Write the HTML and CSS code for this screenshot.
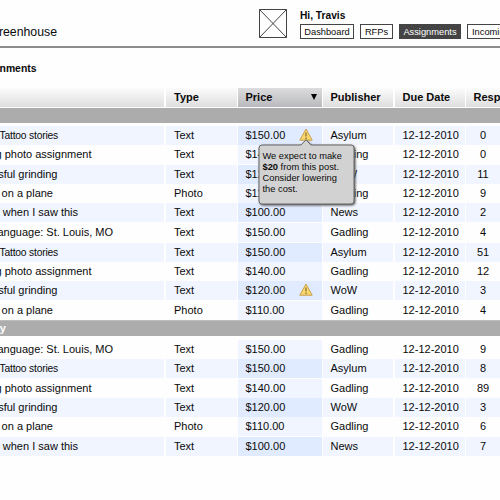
FILE: index.html
```
<!DOCTYPE html>
<html lang="en">
<head>
<meta charset="utf-8">
<title>Greenhouse</title>
<link rel="stylesheet" href="styles.css">
</head>
<body>
<header class="top">
  <div class="brand">reenhouse</div>
  <svg class="avatar" viewBox="0 0 30 31"><path d="M1.500 1.500H28.500V29.500H1.500ZM1.500 1.500L28.500 29.500M28.500 1.500L1.500 29.500"/></svg>
  <div class="user">
    <div class="hello">Hi, Travis</div>
    <nav class="tabs">
      <a class="tab dash">Dashboard</a><a class="tab rfps">RFPs</a><a class="tab assign active">Assignments</a><a class="tab incoming">Incoming</a>
    </nav>
  </div>
</header>
<h1 class="title"><span>gnments</span></h1>
<div class="row head">
  <div></div><div>Type</div><div class="sorted">Price<svg class="arrow" viewBox="0 0 6 6"><path d="M0 0H6L3 6Z"/></svg></div><div>Publisher</div><div>Due Date</div><div>Resp</div>
</div>
<div class="band"></div>
<main class="group first">
  <div class="row alt"><div><span class="name tattoo">Tattoo stories</span></div><div>Text</div><div>$150.00
    <svg class="warn" viewBox="0 0 14 13"><path class="tri" d="M7 1L13.2 12.2H.8Z"/><path class="mark" d="M7 4.5V8.5M7 9.6V11"/></svg>
    <aside class="tip">
      <svg class="bubble" viewBox="0 0 100 66"><path d="M4 6H43L48 .8L53 6H93Q96 6 96 9V62Q96 65 93 65H4Q1 65 1 62V9Q1 6 4 6Z"/></svg>
      <p>We expect to make<br><b>$20</b> from this post.<br>Consider lowering<br>the cost.</p>
    </aside></div><div>Asylum</div><div>12-12-2010</div><div>0</div></div>
  <div class="row"><div><span class="name photo">g photo assignment</span></div><div>Text</div><div>$140.00</div><div>Gadling</div><div>12-12-2010</div><div>0</div></div>
  <div class="row alt"><div><span class="name grind">sful grinding</span></div><div>Text</div><div>$120.00</div><div>WoW</div><div>12-12-2010</div><div>11</div></div>
  <div class="row"><div><span class="name plane">on a plane</span></div><div>Photo</div><div>$110.00</div><div>Gadling</div><div>12-12-2010</div><div>9</div></div>
  <div class="row alt"><div><span class="name saw">e when I saw this</span></div><div>Text</div><div>$100.00</div><div>News</div><div>12-12-2010</div><div>2</div></div>
  <div class="row spaced"><div><span class="name lang">anguage: St. Louis, MO</span></div><div>Text</div><div>$150.00</div><div>Gadling</div><div>12-12-2010</div><div>4</div></div>
  <div class="row alt"><div><span class="name tattoo">Tattoo stories</span></div><div>Text</div><div>$150.00</div><div>Asylum</div><div>12-12-2010</div><div>51</div></div>
  <div class="row"><div><span class="name photo">g photo assignment</span></div><div>Text</div><div>$140.00</div><div>Gadling</div><div>12-12-2010</div><div>12</div></div>
  <div class="row alt"><div><span class="name grind">sful grinding</span></div><div>Text</div><div>$120.00
    <svg class="warn" viewBox="0 0 14 13"><path class="tri" d="M7 1L13.2 12.2H.8Z"/><path class="mark" d="M7 4.5V8.5M7 9.6V11"/></svg></div><div>WoW</div><div>12-12-2010</div><div>3</div></div>
  <div class="row"><div><span class="name plane">on a plane</span></div><div>Photo</div><div>$110.00</div><div>Gadling</div><div>12-12-2010</div><div>4</div></div>
</main>
<div class="band second"><span>ay</span></div>
<section class="group">
  <div class="row"><div><span class="name lang">anguage: St. Louis, MO</span></div><div>Text</div><div>$150.00</div><div>Gadling</div><div>12-12-2010</div><div>9</div></div>
  <div class="row alt"><div><span class="name tattoo">Tattoo stories</span></div><div>Text</div><div>$150.00</div><div>Asylum</div><div>12-12-2010</div><div>8</div></div>
  <div class="row"><div><span class="name photo">g photo assignment</span></div><div>Text</div><div>$140.00</div><div>Gadling</div><div>12-12-2010</div><div>89</div></div>
  <div class="row alt"><div><span class="name grind">sful grinding</span></div><div>Text</div><div>$120.00</div><div>WoW</div><div>12-12-2010</div><div>3</div></div>
  <div class="row"><div><span class="name plane">on a plane</span></div><div>Photo</div><div>$110.00</div><div>Gadling</div><div>12-12-2010</div><div>6</div></div>
  <div class="row alt"><div><span class="name saw">e when I saw this</span></div><div>Text</div><div>$100.00</div><div>News</div><div>12-12-2010</div><div>7</div></div>
</section>
</body>
</html>
```
FILE: styles.css
```
* { box-sizing: border-box; }
body {
  margin: 0;
  width: 500px;
  height: 500px;
  overflow: hidden;
  background: #fefefe;
  color: #0a0a0a;
  font: 11px/19px "Liberation Sans", Arial, sans-serif;
}
.top {
  display: flex;
  height: 48px;
  overflow: hidden;
  border-bottom: 2px solid #8c8c8c;
}
.top > * { flex-shrink: 0; }
.brand {
  display: flex;
  justify-content: flex-end;
  width: 57px;
  margin-right: 201px;
  padding-top: 23px;
  font-size: 12.300px;
}
.avatar {
  width: 30px;
  height: 31px;
  margin: 8px 12px 0 0;
  fill: none;
  stroke: #444;
  stroke-width: 1;
}
.user { padding-top: 7px; }
.hello {
  height: 17px;
  font-size: 10.200px;
  font-weight: bold;
  line-height: 17px;
}
.tabs { display: flex; gap: 6px; }
.tab {
  flex-shrink: 0;
  height: 15px;
  border: 1px solid #444;
  background: #fff;
  font-size: 9.300px;
  line-height: 14px;
  text-align: center;
  white-space: nowrap;
}
.dash { width: 54px; }
.rfps { width: 33px; }
.assign { width: 62px; }
.incoming { width: 60px; padding-left: 4px; text-align: left; }
.active { background: #444; color: #fff; }
.title {
  display: flex;
  justify-content: flex-end;
  width: 36.500px;
  height: 40px;
  margin: 0;
  padding-top: 11px;
  font-size: 10.400px;
}
.row {
  display: grid;
  grid-template-columns: 164px 71.500px 84px 70px 71px 35px;
  column-gap: 1px;
  height: 18.330px;
  margin-bottom: 1px;
}
.row > div {
  position: relative;
  white-space: nowrap;
  padding-left: 8px;
}
.row > div:first-child { padding: 0; }
.row > div:nth-child(2) { margin-left: 1px; }
.row > div:nth-child(5) { margin-left: 1px; }
.row > div:nth-child(6) { padding: 0; text-align: center; }
.row > div:nth-child(3) { background: #f0f5ff; }
.alt > div { background: #f0f5ff; }
.row.alt > div:nth-child(3) { background: #e1ebff; }
.head {
  height: 19px;
  margin-bottom: 1px;
  font-weight: bold;
  line-height: 19px;
}
.head > div { background: linear-gradient(#fcfcfc, #dedede); }
.row.head > div.sorted { background: linear-gradient(#dcdcde, #b9babd); }
.row.head > div:nth-child(6) { padding: 0 0 0 8px; text-align: left; overflow: hidden; }
.arrow {
  position: absolute;
  right: 5px;
  top: 6px;
  width: 6px;
  height: 6px;
}
.band {
  height: 15px;
  background: #acacac;
}
.second {
  display: flex;
  justify-content: flex-end;
  height: 16px;
  margin-bottom: 4.500px;
  padding-right: 494px;
  border-top: 1px solid #bdbdbd;
  color: #fff;
  font-weight: bold;
  line-height: 14px;
}
.first { height: 196.500px; padding-top: 3px; }
.spaced { margin-top: 1.800px; }
.name {
  display: flex;
  justify-content: flex-end;
}
.tattoo { width: 58px; font-size: 10.300px; letter-spacing: -.2px; }
.photo { width: 91.500px; }
.grind { width: 57.500px; }
.plane { width: 53px; }
.saw { width: 78px; }
.lang { width: 113px; }
.warn {
  position: absolute;
  left: 61.500px;
  top: 2px;
  width: 14px;
  height: 13px;
}
.tri { fill: #f8d76c; stroke: #c9a04c; stroke-width: 1; stroke-linejoin: round; }
.mark { fill: none; stroke: #8d7339; stroke-width: 1.300; }
.tip {
  position: absolute;
  left: 20.500px;
  top: 13px;
  z-index: 2;
  width: 100px;
  height: 66px;
}
.bubble {
  position: absolute;
  inset: 0;
  width: 100px;
  height: 66px;
  overflow: visible;
  fill: #d2d2d2;
  stroke: #666;
  filter: drop-shadow(1px 1px 1px #555);
}
.tip p {
  position: relative;
  margin: 0;
  padding: 12px 0 0 4.500px;
  font-size: 9.300px;
  line-height: 11px;
}
```
